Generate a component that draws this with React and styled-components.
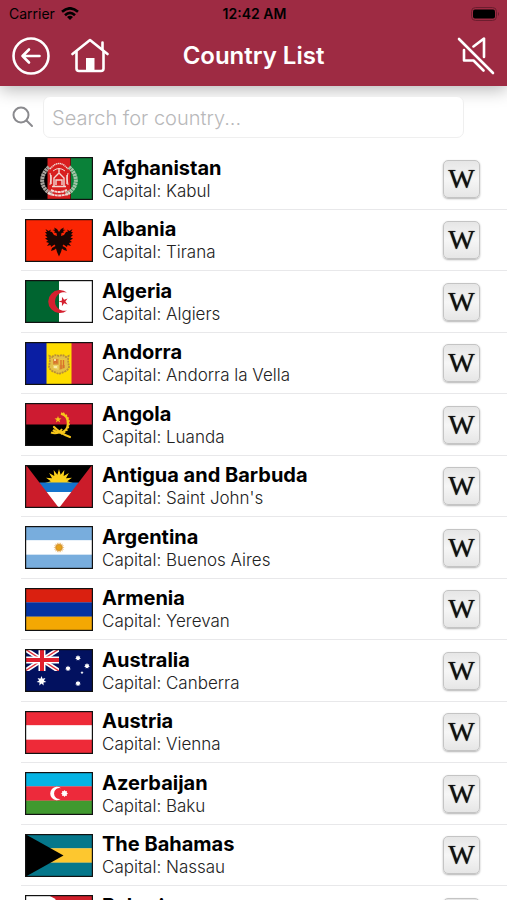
import { useState } from "react";
import styled, { createGlobalStyle } from "styled-components";

const star = (cx, cy, r, points = 5, inner = 0.4, turn = -90) =>
  Array.from({ length: points * 2 }, (_, i) => {
    const len = i % 2 ? r * inner : r;
    const a = ((turn + (i * 180) / points) * Math.PI) / 180;
    return `${(cx + len * Math.cos(a)).toFixed(2)},${(
      cy +
      len * Math.sin(a)
    ).toFixed(2)}`;
  }).join(" ");

const Bands = ({ colors }) =>
  colors.map((color, i) => (
    <rect key={i} y={i * 14.33} width="68" height="14.5" fill={color} />
  ));

const Afghanistan = () => (
  <>
    <rect width="68" height="43" fill="#000" />
    <rect x="22.5" width="23" height="43" fill="#d81f1f" />
    <rect x="46" width="22" height="43" fill="#0a8139" />
    <g fill="none" stroke="#f3d9d4">
      <path d="M24 10C14 19 15 32 27 37" stroke="#a9a49e" strokeWidth="4" strokeDasharray="2.4 .5" />
      <path d="M44 10C54 19 53 32 41 37" stroke="#a3c4a8" strokeWidth="4" strokeDasharray="2.4 .5" />
      <path d="M25 12Q34 1 43 12" strokeWidth="1.4" strokeDasharray="1.4 .5" />
      <path d="M23 36Q34 41 45 36M26 33Q34 37 42 33" strokeWidth="2" strokeDasharray="3 .5" />
      <path d="M27 29.500H41M29 29V21L34 16L39 21V29M31 28V23H37V28M34 16V11M26 27V18M42 27V18" strokeWidth="1.4" />
      <path d="M28 14Q34 9 40 14M25 16Q27 20 25 28M43 16Q41 20 43 28" strokeWidth="1" />
    </g>
  </>
);

const Albania = () => (
  <>
    <rect width="68" height="43" fill="#fb2503" />
    <path
      d="M34 13L32 10L29 8.500L30 10.500L27.500 11L30 12L29 13.500L31.500 14L32 17L29 16L27 13L25 12.500L26 10.500L23.500 12L20.500 10L22 13L20 13L22 15.500L20 16L22.500 18.500L20 19.500L23 21.500L21 23L24 24L22 27L25.500 26L26 28L29.500 25.500L30.500 27L27 29L26 32L29 31L31 29.500L32 33L34 37.500L36 33L37 29.500L39 31L42 32L41 29L37.500 27L38.500 25.500L42 28L42.500 26L46 27L44 24L47 23L45 21.500L48 19.500L45.500 18.500L48 16L46 15.500L48 13L46 13L47.500 10L44.500 12L42 10.500L43 12.500L41 13L39 16L36 17L36.500 14L39 13.500L38 12L40.500 11L38 10.500L39 8.500L36 10Z"
      fill="#180604"
    />
  </>
);

const Algeria = () => (
  <>
    <rect width="68" height="43" fill="#fff" />
    <rect width="34" height="43" fill="#006530" />
    <path d="M42 12.600A11.500 11.500 0 1 0 42 30.400A9.300 9.300 0 1 1 42 12.600Z" fill="#d5202f" />
    <polygon points={star(38.5, 21.5, 5, 5, 0.38, 180)} fill="#d5202f" />
  </>
);

const Andorra = () => (
  <>
    <rect width="68" height="43" fill="#d01f3b" />
    <rect width="46.500" height="43" fill="#fedd00" />
    <rect width="21.500" height="43" fill="#0a1ea3" />
    <path
      d="M27 15Q30 12 34 14Q38 12 41 15L43.500 14L43 18L44 25Q43 28 40 29.500L34 32L28 29.500Q25 28 24 25L25 18L24.500 14Z"
      fill="#e3c04a"
      stroke="#b98f35"
      strokeWidth="1.800"
      strokeDasharray="2 .8"
    />
    <path d="M28 17H33.500V22.500H28Z" fill="#d98b35" />
    <path d="M34.500 17H40V22.500H34.500Z" fill="#eac63c" />
    <path d="M28 23H33.500V28L28 26Z" fill="#ecd46a" />
    <path d="M34.500 23H40V26L34.500 28Z" fill="#dd9a34" />
    <path d="M29 21L31 18L32 21M36 18V27M38.500 18V26" fill="none" stroke="#d8702e" strokeWidth="1.400" />
    <path d="M29 18H31M29 25H32" stroke="#fff3c0" strokeWidth="1.600" />
  </>
);

const Angola = () => (
  <>
    <rect width="68" height="43" fill="#000" />
    <rect width="68" height="21.500" fill="#cd1b31" />
    <g fill="none" stroke="#f7c71b">
      <path d="M36 10.500C46 13 45 29 35 29.500Q31 29.500 28 27" strokeWidth="2.400" />
      <path d="M38 10C47 14 46 29 35.500 31" strokeWidth="1.600" strokeDasharray="1.6 1.6" />
      <path d="M29 24Q36 31 45 34" strokeWidth="2.200" strokeLinecap="round" />
      <path d="M37 26Q33 32 26 29.500" strokeWidth="2" />
    </g>
    <polygon points={star(33, 16.5, 3.6)} fill="#f7c71b" />
  </>
);

const Antigua = () => (
  <>
    <rect width="68" height="43" fill="#cb1c2a" />
    <clipPath id="antigua-wedge">
      <path d="M1 0H67L34 43Z" />
    </clipPath>
    <g clipPath="url(#antigua-wedge)">
      <rect width="68" height="18" fill="#000" />
      <polygon points={star(34, 18, 14, 16, 0.6)} fill="#fbd11b" />
      <rect y="17.500" width="68" height="9.500" fill="#1474cd" />
      <rect y="27" width="68" height="16" fill="#fff" />
    </g>
  </>
);

const Argentina = () => (
  <>
    <Bands colors={["#78addd", "#fff", "#78addd"]} />
    <polygon points={star(34, 21.5, 5.6, 16, 0.65)} fill="#e9bb78" />
    <circle cx="34" cy="21.500" r="3" fill="#e7a21b" stroke="#c98726" strokeWidth=".6" />
  </>
);

const Armenia = () => <Bands colors={["#da2010", "#0433a1", "#f4a803"]} />;

const Australia = () => (
  <>
    <rect width="68" height="43" fill="#02115f" />
    <clipPath id="australia-canton">
      <rect width="34" height="22" />
    </clipPath>
    <g clipPath="url(#australia-canton)">
      <path d="M0 0L34 22M34 0L0 22" stroke="#fff" strokeWidth="4.500" />
      <path d="M0 0L34 22M34 0L0 22" stroke="#e0303d" strokeWidth="1.400" />
      <path d="M17 0V22M0 11H34" stroke="#fff" strokeWidth="7" />
      <path d="M17 0V22M0 11H34" stroke="#e01f2e" strokeWidth="4" />
    </g>
    <g fill="#fff">
      <polygon points={star(16.5, 32, 5, 7, 0.5)} />
      <polygon points={star(53, 9, 2.9, 7, 0.6)} />
      <polygon points={star(43, 19.5, 2.9, 7, 0.6)} />
      <polygon points={star(62, 17, 2.9, 7, 0.6)} />
      <polygon points={star(53, 34.5, 2.9, 7, 0.6)} />
      <polygon points={star(57, 23.5, 1.8)} />
    </g>
  </>
);

const Austria = () => <Bands colors={["#ee2a38", "#fff", "#ee2a38"]} />;

const Azerbaijan = () => (
  <>
    <Bands colors={["#05b3e3", "#ed2a3b", "#40992f"]} />
    <path d="M36 16.200A6.700 6.700 0 1 0 36 26.800A5.500 5.500 0 1 1 36 16.200Z" fill="#fff" />
    <polygon points={star(39.5, 21.5, 3.4, 8, 0.7)} fill="#fff" />
  </>
);

const Bahamas = () => (
  <>
    <Bands colors={["#05778b", "#fdc72f", "#05778b"]} />
    <path d="M0 0L38.500 21.500L0 43Z" fill="#000" />
  </>
);

const Bahrain = () => (
  <>
    <rect width="68" height="43" fill="#d01f2b" />
    <path d="M0 0H23L31 4.300L23 8.600L31 13L23 17.200L31 21.500L23 26L31 30L23 34.400L31 39L23 43H0Z" fill="#fff" />
  </>
);

const countries = [
  { name: "Afghanistan", capital: "Kabul", Flag: Afghanistan },
  { name: "Albania", capital: "Tirana", Flag: Albania },
  { name: "Algeria", capital: "Algiers", Flag: Algeria },
  { name: "Andorra", capital: "Andorra la Vella", Flag: Andorra },
  { name: "Angola", capital: "Luanda", Flag: Angola },
  { name: "Antigua and Barbuda", capital: "Saint John's", Flag: Antigua },
  { name: "Argentina", capital: "Buenos Aires", Flag: Argentina },
  { name: "Armenia", capital: "Yerevan", Flag: Armenia },
  { name: "Australia", capital: "Canberra", Flag: Australia },
  { name: "Austria", capital: "Vienna", Flag: Austria },
  { name: "Azerbaijan", capital: "Baku", Flag: Azerbaijan },
  { name: "The Bahamas", capital: "Nassau", Flag: Bahamas },
  { name: "Bahrain", capital: "Manama", Flag: Bahrain },
];

const App = () => {
  const [keyword, setKeyword] = useState("");

  const filtered = countries.filter((v) =>
    v.name.toLowerCase().includes(keyword.toLowerCase())
  );

  return (
    <>
      <GlobalStyle />
      <Screen>
        <Header>
          <StatusBar>
            <Carrier>
              Carrier
              <svg width="18" height="13" viewBox="0 0 18 13" aria-hidden="true">
                <g fill="none" stroke="#000" strokeWidth="2.600">
                  <path d="M1 4.800Q9 -2.200 17 4.800" />
                  <path d="M4 8.200Q9 3.600 14 8.200" />
                </g>
                <path d="M6 10Q9 7.600 12 10L9 13Z" />
              </svg>
            </Carrier>
            <Time>12:42 AM</Time>
            <Battery>
              <svg width="29" height="14" viewBox="0 0 29 14" aria-hidden="true">
                <rect x=".5" y=".5" width="25" height="13" rx="4" fill="none" stroke="#6c1d2e" />
                <rect x="2" y="2.500" width="22" height="9" rx="2" />
                <path d="M27 5Q29 7 27 9Z" fill="#6c1d2e" />
              </svg>
            </Battery>
          </StatusBar>
          <NavBar>
            <NavGroup>
              <IconButton type="button" aria-label="Back">
                <svg width="38" height="38" viewBox="0 0 38 38">
                  <circle cx="19" cy="19" r="17.500" />
                  <path d="M27.500 19H10.500M17 12.500L10.500 19L17 25.500" />
                </svg>
              </IconButton>
              <IconButton type="button" aria-label="Home">
                <svg width="38" height="38" viewBox="0 0 38 38">
                  <path d="M1.500 17L19 3L36.500 17" />
                  <path d="M5.500 15V31.500Q5.500 34 8 34H30Q32.500 34 32.500 31.500V15M31.500 12V5.500" />
                  <path d="M15 21H23.500V34H15Z" fill="#fff" stroke="none" />
                </svg>
              </IconButton>
            </NavGroup>
            <Title>Country List</Title>
            <NavGroup $end>
              <IconButton type="button" aria-label="Mute">
                <svg width="38" height="38" viewBox="0 0 38 38">
                  <path d="M2 2L36 36" />
                  <path d="M7 13V23.500H16.500L26.500 33.500M16.500 9.500L27 1.500V20" />
                </svg>
              </IconButton>
            </NavGroup>
          </NavBar>
        </Header>
        <SearchBar>
          <label htmlFor="search">
            <svg width="22" height="22" viewBox="0 0 22 22" role="img" aria-label="Search">
              <circle cx="9" cy="9" r="7.500" />
              <path d="M14.500 14.500L20 20" />
            </svg>
          </label>
          <SearchInput
            id="search"
            type="text"
            placeholder="Search for country..."
            value={keyword}
            onChange={(e) => setKeyword(e.target.value)}
          />
        </SearchBar>
        <List>
          {filtered.map(({ name, capital, Flag }) => (
            <Row key={name}>
              <FlagImage viewBox="0 0 68 43" aria-hidden="true">
                <Flag />
                <rect x=".5" y=".5" width="67" height="42" fill="none" stroke="#111" strokeWidth="1.400" />
              </FlagImage>
              <Info>
                <Name>{name}</Name>
                <Capital>Capital: {capital}</Capital>
              </Info>
              <WikiLink
                href={`https://en.wikipedia.org/wiki/${name.replace(/ /g, "_")}`}
              >
                W
              </WikiLink>
            </Row>
          ))}
        </List>
      </Screen>
    </>
  );
};

const GlobalStyle = createGlobalStyle`
  * {
    box-sizing: border-box;
  }
  body {
    margin: 0;
    background: #fff;
    color: #000;
    font-family: Inter, "Liberation Sans", sans-serif;
  }
`;

const Screen = styled.div`
  display: flex;
  flex-direction: column;
  height: 100vh;
  overflow: hidden;
`;

const Header = styled.header`
  flex: none;
  padding-bottom: 10px;
  background: #9e2b43;
  box-shadow: 0 4px 16px rgba(0, 0, 0, 0.28);
`;

const StatusBar = styled.div`
  display: grid;
  grid-template-columns: 1fr auto 1fr;
  align-items: center;
  height: 27px;
  padding: 0 7px 0 9px;
  font-size: 14px;
`;

const Carrier = styled.span`
  display: flex;
  align-items: center;
  gap: 6px;
`;

const Time = styled.span`
  font-weight: 600;
`;

const Battery = styled.span`
  display: flex;
  justify-content: flex-end;
`;

const NavBar = styled.nav`
  display: grid;
  grid-template-columns: 1fr auto 1fr;
  align-items: center;
  height: 49px;
  padding: 9px 12px 0;
`;

const NavGroup = styled.div`
  display: flex;
  gap: 21px;
  justify-content: ${({ $end }) => ($end ? "flex-end" : "flex-start")};
`;

const IconButton = styled.button`
  display: flex;
  padding: 0;
  border: 0;
  background: none;
  cursor: pointer;

  svg {
    fill: none;
    stroke: #fff;
    stroke-width: 2.6px;
    stroke-linecap: round;
    stroke-linejoin: round;
  }
`;

const Title = styled.h1`
  margin: 0;
  color: #fff;
  font-size: 24px;
  font-weight: 600;
  line-height: 28px;
`;

const SearchBar = styled.div`
  display: flex;
  flex: none;
  align-items: center;
  gap: 9px;
  padding: 10px 43px 10px 12px;

  label {
    display: flex;
  }
  svg {
    fill: none;
    stroke: #8a8a8e;
    stroke-width: 2px;
    stroke-linecap: round;
  }
`;

const SearchInput = styled.input`
  flex: 1;
  min-width: 0;
  height: 42px;
  padding: 1px 8px 0;
  border: 1px solid #efefef;
  border-radius: 7px;
  background: #fff;
  color: #000;
  font-family: inherit;
  font-size: 20px;
  font-weight: 300;
  outline: none;

  &::placeholder {
    color: #b8b8ba;
    opacity: 1;
  }
`;

const List = styled.ul`
  flex: 1;
  min-height: 0;
  margin: 0;
  padding: 0 0 0 21px;
  overflow: hidden;
  list-style: none;
`;

const Row = styled.li`
  display: flex;
  align-items: center;
  height: 62px;
  padding: 0 27px 0 4px;
  border-bottom: 1px solid #e8e8ea;

  &:nth-child(even) {
    height: 61px;
  }
`;

const FlagImage = styled.svg`
  flex: none;
  width: 68px;
  height: 43px;
`;

const Info = styled.div`
  flex: 1;
  min-width: 0;
  margin-left: 9px;
`;

const Name = styled.p`
  margin: 0;
  font-size: 20px;
  font-weight: 700;
  line-height: 24px;
`;

const Capital = styled.p`
  margin: 0;
  color: #222;
  font-size: 17px;
  font-weight: 300;
  line-height: 22px;
`;

const WikiLink = styled.a`
  display: flex;
  flex: none;
  align-items: center;
  justify-content: center;
  width: 37px;
  height: 38px;
  border: 1px solid #c4c4c4;
  border-radius: 5px;
  background: linear-gradient(#e6e6e6, #f6f6f6 50%, #e6e6e6);
  box-shadow: 0 1px 2px rgba(0, 0, 0, 0.3);
  color: #111;
  font-family: "Liberation Serif", serif;
  font-size: 28px;
  text-decoration: none;
  text-shadow: 0 0 1px #222;
`;

export default App;
